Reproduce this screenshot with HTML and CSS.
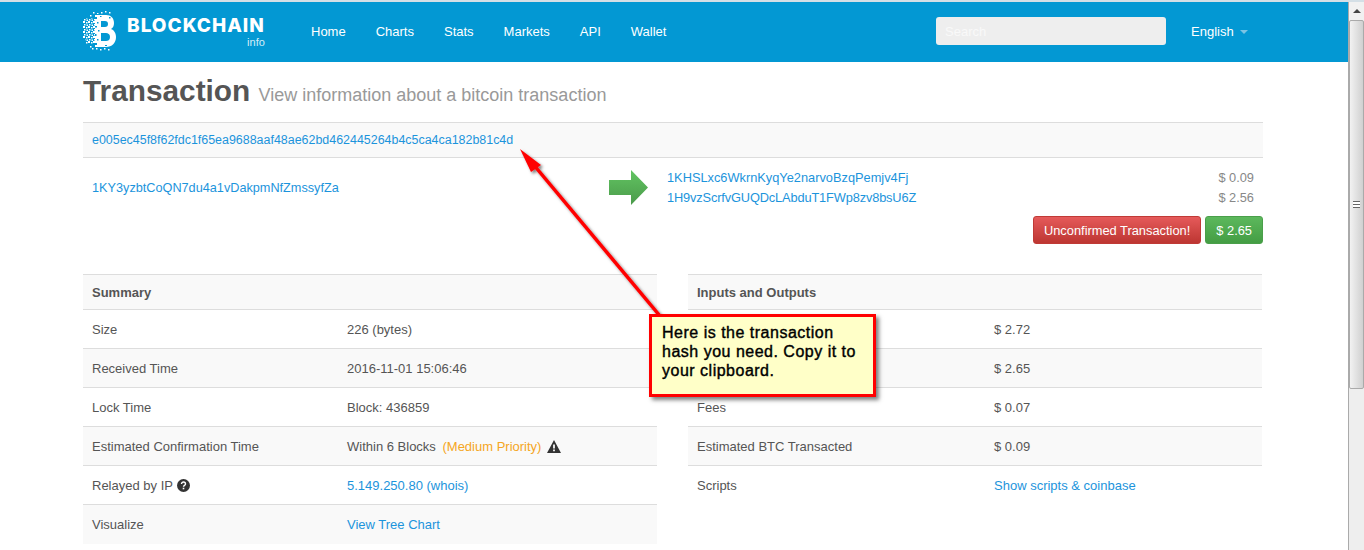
FILE: index.html
```html
<!DOCTYPE html>
<html lang="en">
<head>
<meta charset="utf-8">
<title>Transaction</title>
<link rel="stylesheet" href="styles.css">
</head>
<body>
<div class="window">
  <div class="page">
    <header class="navbar">
      <a class="brand">
        <svg class="brand-mark" width="34" height="40" viewBox="0 0 34 40" fill="#fff">
          <defs>
            <pattern id="speck" width="5" height="5" patternUnits="userSpaceOnUse">
              <rect x="0" y="0" width="2" height="2"/><rect x="3" y="1" width="1.500" height="1.500"/><rect x="1" y="3" width="1.500" height="1.500"/><rect x="3.500" y="3.500" width="1.500" height="1.500"/>
            </pattern>
          </defs>
          <path fill="url(#speck)" d="M0 7h13v26H3l-1-6H0z"/>
          <path fill-rule="evenodd" d="M12 4h11c5 0 8 3 8 8 0 3-1 5-3 6 3 1 5 4 5 8 0 6-4 10-10 10H12zM18 10v6h4c2 0 3-1 3-3s-1-3-3-3zM18 22v8h5c2 0 4-1 4-4s-2-4-4-4z"/>
          <g fill="#0398d3">
            <rect x="12" y="6" width="2" height="2"/><rect x="14" y="11" width="1.500" height="1.500"/><rect x="12" y="15" width="2" height="1.500"/><rect x="15" y="19" width="1.500" height="1.500"/><rect x="12" y="23" width="1.500" height="2"/><rect x="14" y="28" width="1.500" height="1.500"/><rect x="12" y="32" width="2" height="2"/><rect x="17" y="5" width="1.500" height="1"/><rect x="22" y="34" width="2" height="1"/><rect x="26" y="6" width="1.500" height="1.500"/>
          </g>
          <rect x="10" y="1" width="1.500" height="1.500"/><rect x="14" y="2" width="1.500" height="1"/><rect x="18" y="1" width="1.500" height="1.500"/><rect x="22" y="0" width="1.500" height="1.500"/><rect x="26" y="1" width="1.500" height="1.500"/><rect x="7" y="4" width="1.500" height="1.500"/><rect x="9" y="37" width="1.500" height="1.500"/><rect x="13" y="37" width="1.500" height="1.500"/><rect x="17" y="38" width="1.500" height="1.500"/><rect x="21" y="37" width="1.500" height="1.500"/><rect x="25" y="38" width="1.500" height="1.500"/><rect x="7" y="35" width="1.500" height="1.500"/>
        </svg>
        <span class="brand-text">
          <span class="brand-name">BLOCKCHAIN</span>
          <span class="brand-sub">info</span>
        </span>
      </a>
      <nav class="nav-links">
        <a>Home</a><a>Charts</a><a>Stats</a><a>Markets</a><a>API</a><a>Wallet</a>
      </nav>
      <input class="search" type="text" placeholder="Search">
      <a class="lang">English <span class="caret"></span></a>
    </header>

    <main class="content">
      <h1 class="title">Transaction <small>View information about a bitcoin transaction</small></h1>

      <div class="hash-row"><a>e005ec45f8f62fdc1f65ea9688aaf48ae62bd462445264b4c5ca4ca182b81c4d</a></div>

      <div class="tx-row">
        <a class="tx-input">1KY3yzbtCoQN7du4a1vDakpmNfZmssyfZa</a>
        <svg class="tx-arrow" width="40" height="35" viewBox="0 0 40 35">
          <defs>
            <linearGradient id="arrowFill" x1="0" y1="0" x2="0" y2="1">
              <stop offset="0" stop-color="#62c462"/>
              <stop offset="1" stop-color="#4a9a4a"/>
            </linearGradient>
          </defs>
          <path d="M0 10h22V0l17 17.500L22 35V25H0z" fill="url(#arrowFill)"/>
        </svg>
        <div class="tx-outputs">
          <div class="tx-output"><a>1KHSLxc6WkrnKyqYe2narvoBzqPemjv4Fj</a><span>$ 0.09</span></div>
          <div class="tx-output tx-output-tight"><a>1H9vzScrfvGUQDcLAbduT1FWp8zv8bsU6Z</a><span>$ 2.56</span></div>
        </div>
      </div>
      <div class="tx-buttons">
        <span class="btn btn-red">Unconfirmed Transaction!</span>
        <span class="btn btn-green">$ 2.65</span>
      </div>

      <div class="tables">
        <table class="info info-left">
          <colgroup><col class="col-label"><col></colgroup>
          <tr class="head"><th colspan="2">Summary</th></tr>
          <tr><td>Size</td><td>226 (bytes)</td></tr>
          <tr class="odd"><td>Received Time</td><td>2016-11-01 15:06:46</td></tr>
          <tr><td>Lock Time</td><td>Block: 436859</td></tr>
          <tr class="odd"><td>Estimated Confirmation Time</td><td>Within 6 Blocks <span class="warn">(Medium Priority)</span>
            <svg class="ico" width="14" height="13" viewBox="0 0 14 13"><path fill="#333" fill-rule="evenodd" d="M7 0l7 13H0zM6.100 4.500v4h1.800v-4zM6.100 9.500v1.700h1.800V9.500z"/></svg></td></tr>
          <tr><td>Relayed by IP
            <svg class="ico ico-help" width="13" height="13" viewBox="0 0 13 13"><circle cx="6.500" cy="6.500" r="6.500" fill="#333"/><path d="M4.500 5c0-1.300 1-2 2-2s2 .7 2 1.900c0 1.500-2 1.500-2 2.900" fill="none" stroke="#fff" stroke-width="1.400"/><rect x="5.700" y="8.700" width="1.600" height="1.600" fill="#fff"/></svg></td><td><a>5.149.250.80</a> <a>(whois)</a></td></tr>
          <tr class="odd plain"><td>Visualize</td><td><a>View Tree Chart</a></td></tr>
        </table>
        <table class="info info-right">
          <colgroup><col class="col-label"><col></colgroup>
          <tr class="head"><th colspan="2">Inputs and Outputs</th></tr>
          <tr><td></td><td>$ 2.72</td></tr>
          <tr class="odd"><td></td><td>$ 2.65</td></tr>
          <tr><td>Fees</td><td>$ 0.07</td></tr>
          <tr class="odd"><td>Estimated BTC Transacted</td><td>$ 0.09</td></tr>
          <tr class="plain"><td>Scripts</td><td><a>Show scripts &amp; coinbase</a></td></tr>
        </table>
      </div>
    </main>
  </div>

  <div class="scrollbar">
    <div class="scroll-up"><span class="scroll-tri"></span></div>
    <div class="scroll-thumb"><span class="grip"></span></div>
  </div>

  <svg class="pointer" width="220" height="190" viewBox="0 0 220 190">
    <defs>
      <filter id="pointerShadow" x="-20%" y="-20%" width="140%" height="140%">
        <feDropShadow dx="2" dy="2" stdDeviation="1.500" flood-color="#000" flood-opacity=".5"/>
      </filter>
    </defs>
    <g filter="url(#pointerShadow)">
      <path d="M32 32L164 190" stroke="#f00" stroke-width="3.500" fill="none"/>
      <path d="M19 17L40 33 30 40z" fill="#f00"/>
    </g>
  </svg>
  <div class="callout">Here is the transaction hash you need. Copy it to your clipboard.</div>
</div>
</body>
</html>
```
FILE: styles.css
```css
* { box-sizing: border-box; }
html, body { margin: 0; height: 100%; overflow: hidden; }
body {
  font-family: "Liberation Sans", Arial, sans-serif;
  font-size: 13px;
  color: #555;
  background: #fff;
}
a { color: #1c94dc; text-decoration: none; }

.window { position: relative; display: flex; width: 1364px; height: 550px; overflow: hidden; border-top: 2px solid #d4dfe6; }
.page { width: 1348px; flex: none; }

.navbar {
  display: flex;
  align-items: center;
  height: 60px;
  padding-left: 83px;
  padding-bottom: 2px;
  background: #0398d3;
  color: #fff;
}
.brand { display: flex; align-items: center; gap: 10px; width: 213px; flex: none; }
.brand-mark { flex: none; margin-top: 0; }
.brand-text { display: flex; flex-direction: column; align-items: flex-end; margin-top: 2px; }
.brand-name { font-family: Inter, sans-serif; font-weight: 800; font-size: 19px; letter-spacing: 1px; line-height: 20px; color: #fff; }
.brand-sub { font-size: 11px; line-height: 12px; color: #d6eef8; }
.nav-links { display: flex; gap: 30px; flex: none; width: 640px; margin-left: 15px; }
.nav-links a { color: #fff; font-size: 13px; }
.search {
  width: 230px;
  height: 28px;
  margin-left: -15px;
  border: 0;
  border-radius: 3px;
  background: #eee;
  padding: 0 9px;
  font: 13px "Liberation Sans", sans-serif;
}
.search::placeholder { color: #f9f9f9; }
.lang { margin-left: 25px; color: #fff; }
.caret { display: inline-block; margin-left: 3px; vertical-align: middle; border: 4px solid transparent; border-top-color: #7cc4e4; border-bottom: 0; }

.content { width: 1180px; margin-left: 83px; }
.title { margin: 0; height: 60px; padding-top: 13px; font-size: 29.800px; line-height: 32px; font-weight: 700; color: #555; }
.title small { font-size: 18px; font-weight: 400; color: #999; }

.hash-row {
  display: flex;
  align-items: center;
  height: 36px;
  padding-left: 9px;
  background: #f9f9f9;
  border-top: 1px solid #ddd;
  border-bottom: 1px solid #ddd;
  font-size: 12.450px;
}
.tx-row { display: flex; height: 58px; }
.tx-input { width: 526px; padding: 23px 0 0 9px; font-size: 12.700px; }
.tx-arrow { flex: none; margin-top: 12px; }
.tx-outputs { flex: 1; margin-left: 18px; padding: 10px 9px 0 0; }
.tx-output { display: flex; justify-content: space-between; height: 20px; line-height: 20px; font-size: 12.800px; }
.tx-output-tight a { letter-spacing: -.14px; }
.tx-output span { color: #888; }

.tx-buttons { display: flex; justify-content: flex-end; gap: 4px; height: 58px; }
.btn {
  display: inline-block;
  height: 28px;
  padding: 0 10px;
  color: #fff;
  border-radius: 3px;
  font-size: 12.850px;
  line-height: 27px;
}
.btn-red { background: linear-gradient(#e55a5a, #bd3632); border: 1px solid #c03a36; }
.btn-green { background: linear-gradient(#5cb85c, #449d44); border: 1px solid #4a9f4a; }

.tables { display: flex; align-items: flex-start; gap: 31px; }
.info { width: 574px; flex: none; border-collapse: collapse; table-layout: fixed; }
.info-left .col-label { width: 255px; }
.info-right .col-label { width: 297px; }
.info th {
  height: 35px;
  padding: 0 9px;
  text-align: left;
  font-size: 13px;
  background: #f9f9f9;
  border-top: 1px solid #ddd;
  border-bottom: 1px solid #ddd;
}
.info td { height: 39px; padding: 0 9px; vertical-align: middle; border-bottom: 1px solid #ddd; }
.info .plain td { border-bottom: 0; }
.info .odd td { background: #f9f9f9; }
.warn { color: #f5a623; margin-left: 3px; }
.ico { vertical-align: -2px; margin-left: 2px; }
.ico-help { margin-left: 1px; }

.scrollbar { flex: 1; border-left: 1px solid #aaa; background: #eee; display: flex; flex-direction: column; }
.scroll-up { height: 18px; display: flex; align-items: center; justify-content: center; background: #f1f1f1; }
.scroll-tri { border: 4px solid transparent; border-bottom: 4px solid #444; border-top: 0; }
.scroll-thumb {
  height: 369px;
  background: linear-gradient(90deg, #f2f2f2, #d0d0d0);
  border: 1px solid #aaa;
  border-radius: 2px;
  display: flex;
  align-items: center;
  justify-content: center;
}
.grip { width: 7px; height: 7px; border-top: 1px solid #666; border-bottom: 1px solid #666; background: linear-gradient(#fff 0 2px, #666 2px 3px, #fff 3px); }

.pointer { position: absolute; left: 501px; top: 130px; }
.callout {
  position: absolute;
  left: 649px;
  top: 312px;
  width: 227px;
  height: 83px;
  padding: 6px 12px 5px 10px;
  background: #ffffc8;
  border: 3px solid #f00;
  box-shadow: 3px 3px 4px rgba(0,0,0,.5);
  color: #000;
  font-size: 16px;
  letter-spacing: .5px;
  line-height: 19px;
  -webkit-text-stroke: .4px #000;
}
```
